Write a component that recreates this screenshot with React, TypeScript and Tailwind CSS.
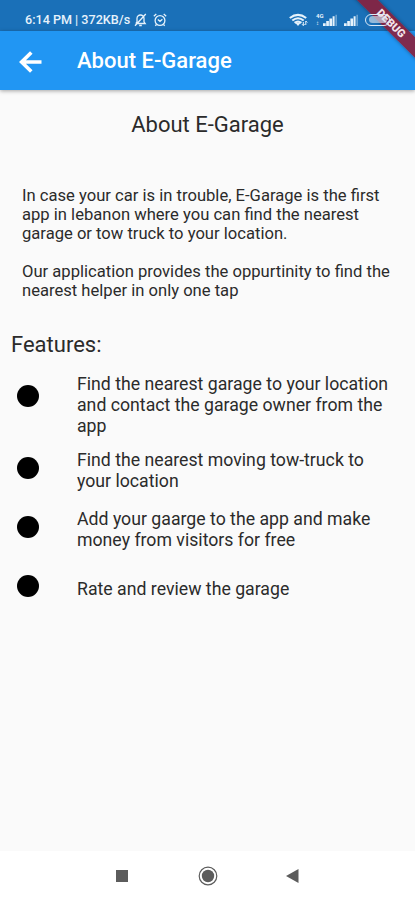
const FEATURES = [
  { lines: ['Find the nearest garage to your location', 'and contact the garage owner from the', 'app'], row: 'h-[85px] pt-[10px]', dot: 'mt-[11px]' },
  { lines: ['Find the nearest moving tow-truck to', 'your location'], row: 'h-[59px] pt-px', dot: 'mt-[7px]' },
  { lines: ['Add your gaarge to the app and make', 'money from visitors for free'], row: 'h-[59px] pt-px', dot: 'mt-[7px]' },
  { lines: ['Rate and review the garage'], row: 'h-[59px] pt-[12px]', dot: '-mt-[4px]' },
]

function BellOffIcon() {
  return (
    <svg className="ml-[3px] h-[14px] w-[13px]" viewBox="0 0 13 14" fill="none" stroke="currentColor" strokeWidth="1.3">
      <path d="M2 10.5h9.2L10 8.8V5.5a3.5 3.5 0 0 0-7 0v3.3L1.8 10.5M5.2 12.5h2.6M1 12.8 11.8 1" />
    </svg>
  )
}

function AlarmIcon() {
  return (
    <svg className="ml-[6px] h-[14px] w-[14px]" viewBox="0 0 14 14" fill="none" stroke="currentColor" strokeWidth="1.3">
      <circle cx="7" cy="7.5" r="4.9" />
      <path d="M.8 3.2 3.3 1M13.2 3.2 10.7 1M4.8 6.5 7 8.3l2.4-2M3.5 11.5l-1.2 1.3M10.5 11.5l1.2 1.3" />
    </svg>
  )
}

function WifiIcon() {
  return (
    <svg className="h-[14px] w-[20px]" viewBox="0 0 20 14" fill="none" stroke="currentColor">
      <path d="M.8 5Q9-1.3 17.2 5M3.3 7.5Q9 3 14.7 7.5M5.6 9.9Q9 7.3 12.4 9.9" strokeWidth="2.1" />
      <path d="M6.5 10h5L9 13Z" fill="currentColor" stroke="none" />
      <path d="M14.3 12.5V9M13 11.2l1.3 1.3 1.3-1.3M16.8 12V8l1.5 1.5" strokeWidth="1" />
    </svg>
  )
}

function SignalIcon() {
  return (
    <svg className="h-[12px] w-[15px]" viewBox="0 0 15 12" fill="currentColor">
      <path d="M0 9.2h2.7V12H0zM3.2 7h2.7v5H3.2zM6.4 4.5h2.7V12H6.400zM9.6 2.2h2V12h-2z" />
      <path d="M12.5 .8h1.300V12h-1.300z" opacity=".5" />
    </svg>
  )
}

function StatusBar() {
  return (
    <div className="flex h-[31px] items-center bg-[#1a70b8] pt-[8px] pl-[25px] text-[#e6f2fb]">
      <span className="w-[106px] text-[12.6px] leading-[14px] font-medium whitespace-nowrap">6:14 PM | 372KB/s</span>
      <BellOffIcon />
      <AlarmIcon />
      <div className="ml-[122px] flex items-center">
        <WifiIcon />
        <div className="ml-[7px] flex h-[13px] w-[7px] flex-col text-[6px] leading-[6px] font-bold">
          <span>4G</span>
          <span className="mt-px leading-[5px]">↕</span>
        </div>
        <SignalIcon />
        <div className="w-[6px]" />
        <SignalIcon />
        <div className="relative z-20 ml-[6px] flex h-[12px] w-[25px] items-center justify-center rounded-full border border-[#dbe9f6]">
          <span className="h-[7px] w-[18px] rounded-full bg-[#d5e3f0]/65" />
        </div>
      </div>
    </div>
  )
}

function AppBar() {
  return (
    <header className="relative flex h-[59px] items-center bg-[#2196f3] pl-[19px] text-white shadow-[0_1px_4px_rgba(0,0,0,0.35)]">
      <svg className="mt-[3px] h-[22px] w-[23px]" viewBox="0 0 23 22" fill="none" stroke="currentColor" strokeWidth="3.6">
        <path d="M22.5 11H3M12.3 1.5 2.6 11l9.7 9.5" />
      </svg>
      <h1 className="ml-[35px] text-[22px] leading-[28px] font-medium">About E-Garage</h1>
    </header>
  )
}

function DebugBanner() {
  return (
    <div className="absolute top-[16px] left-[336px] z-10 flex h-[15px] w-[110px] rotate-45 items-center justify-center bg-[#8a1f3c]/90 text-[11px] leading-none font-black text-[#f3e3ea] shadow-[0_0_4px_rgba(0,0,0,0.4)]">
      DEBUG
    </div>
  )
}

function NavBar() {
  return (
    <nav className="flex h-[49px] items-center bg-white text-[#5c5c5c]">
      <span className="ml-[116px] h-[12px] w-[12px] bg-[#5c5c5c]" />
      <svg className="ml-[70px] h-[20px] w-[20px]" viewBox="0 0 20 20">
        <circle cx="10" cy="10" r="8.8" fill="none" stroke="currentColor" strokeWidth="1.2" />
        <circle cx="10" cy="10" r="6.2" fill="currentColor" />
      </svg>
      <svg className="ml-[68px] h-[14px] w-[13px]" viewBox="0 0 13 14" fill="currentColor">
        <path d="M0 7 12.5 0v14Z" />
      </svg>
    </nav>
  )
}

export default function App() {
  return (
    <div className="relative flex h-[900px] w-[415px] flex-col overflow-hidden bg-[#fafafa] font-[Roboto,sans-serif] text-[#2b2b2b]">
      <StatusBar />
      <AppBar />
      <main className="flex-1">
        <h2 className="mt-[21px] text-center text-[22px] leading-[28px] whitespace-nowrap">About E-Garage</h2>
        <div className="mt-[47px] ml-[22px] text-[16.6px] leading-[19px] whitespace-nowrap">
          <p>
            In case your car is in trouble, E-Garage is the first
            <br />
            app in lebanon where you can find the nearest
            <br />
            garage or tow truck to your location.
          </p>
          <p className="mt-[19px]">
            Our application provides the oppurtinity to find the
            <br />
            nearest helper in only one tap
          </p>
        </div>
        <h3 className="mt-[31px] ml-[11px] text-[22px] leading-[28px]">Features:</h3>
        <ul className="mt-[5px]">
          {FEATURES.map((item) => (
            <li key={item.lines[0]} className={`flex items-start pl-[17px] ${item.row}`}>
              <span className={`h-[22px] w-[22px] rounded-full bg-black ${item.dot}`} />
              <p className="ml-[38px] text-[17.7px] leading-[21px] whitespace-nowrap">
                {item.lines.map((line) => (
                  <span key={line} className="block">{line}</span>
                ))}
              </p>
            </li>
          ))}
        </ul>
      </main>
      <NavBar />
      <DebugBanner />
    </div>
  )
}
